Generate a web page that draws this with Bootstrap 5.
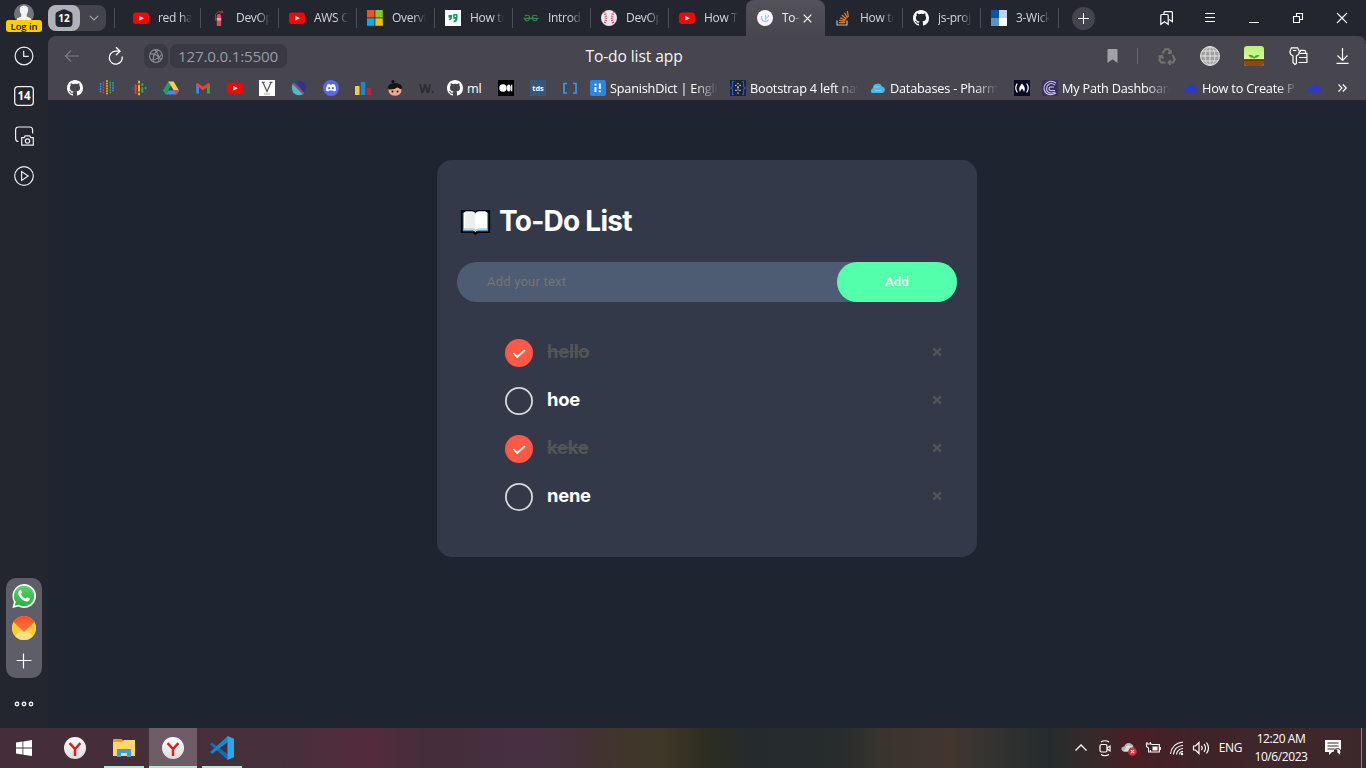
<!DOCTYPE html>
<html lang="en">
<head>
<meta charset="utf-8">
<meta name="viewport" content="width=device-width, initial-scale=1">
<title>To-do list app</title>
<link href="https://cdn.jsdelivr.net/npm/bootstrap@5.3.0/dist/css/bootstrap.min.css" rel="stylesheet">
<style>
  body { width: 1366px; height: 768px; overflow: hidden; background: #24262f; font-family: "Open Sans", "Noto Sans", sans-serif; font-size: 12px; color: #fff; line-height: 1; }
  svg { display: block; flex: none; overflow: visible; }
  .side { width: 48px; height: 728px; background: #24262f; }
  .login { background: #ffcc00; color: #111; font-size: 9.5px; font-weight: 600; width: 36px; height: 12px; border-radius: 3px; line-height: 13px; margin-top: -4px; z-index: 1; letter-spacing: -.1px; }
  .side-apps { width: 36px; height: 100px; border-radius: 10px; background: #5d5e67; margin-top: 392px; padding-top: 6px; }
  .strip { height: 36px; background: #24262f; }
  .group-pill { width: 58px; height: 26px; background: #43444d; border-radius: 8px; }
  .group-count { width: 32px; height: 26px; background: #b1b2b7; border-radius: 8px; }
  .tab { width: 78px; height: 36px; padding-left: 10px; color: #d5d6da; }
  .tab .clip { width: 34px; margin-left: 9px; overflow: hidden; white-space: nowrap; line-height: 18px; letter-spacing: -.3px; -webkit-mask-image: linear-gradient(90deg, #000 65%, transparent); mask-image: linear-gradient(90deg, #000 65%, transparent); }
  .sep { width: 1px; height: 20px; background: #4d4e57; flex: none; }
  .tab.on { width: 79px; margin-left: -1px; padding-left: 11px; background: linear-gradient(#53525b, #47464f); border-radius: 8px 8px 0 0; color: #f0f0f2; }
  .tab.on .clip { width: 18px; }
  .plus { width: 23px; height: 23px; border-radius: 50%; background: #43444d; margin-left: 13px; }
  .wbtn { width: 44px; height: 36px; }
  .bars { height: 64px; background: #47464f; border-radius: 8px 8px 0 0; }
  .toolbar { height: 40px; }
  .url { background: #383943; height: 24px; border-radius: 7px; color: #9a9ba2; }
  .addr { font-size: 15.2px; width: 117px; padding-left: 8px; line-height: 25px; letter-spacing: -.2px; }
  .ttl { left: 0; right: 0; margin-left: -146px; font-size: 15.6px; color: #f4f4f5; line-height: 40px; pointer-events: none; letter-spacing: -.1px; }
  .marks { height: 24px; padding-left: 11px; }
  .mk { width: 32px; height: 24px; }
  .mt { padding-left: 4px; width: 140px; }
  .mt span { margin-left: 4px; width: 108px; overflow: hidden; white-space: nowrap; font-size: 12.7px; line-height: 20px; letter-spacing: -.2px; -webkit-mask-image: linear-gradient(90deg, #000 78%, transparent); mask-image: linear-gradient(90deg, #000 78%, transparent); }
  .page { background: #1f2530; height: 628px; padding-top: 60px; }
  .todo { width: 540px; height: 397px; background: #333948; border-radius: 15px; padding: 42px 20px 0; font-family: Inter, sans-serif; }
  .todo h2 { font-size: 28px; font-weight: 700; height: 40px; margin: 0 0 20px; padding-left: 3px; letter-spacing: -.75px; }
  .entry { height: 40px; border-radius: 20px; background: #4e5c73; font-family: Roboto, sans-serif; font-size: 13px; }
  .entry input { background: none; border: 0; outline: 0; padding: 0 30px 2px; color: #fff; letter-spacing: .2px; }
  .entry input::placeholder { color: #757575; opacity: 1; }
  .entry button { width: 120px; border: 0; border-radius: 20px; background: #53ffaa; color: #fff; font-weight: 500; letter-spacing: .3px; padding: 0 0 2px; }
  .item { height: 48px; padding-left: 48px; padding-right: 15px; font-size: 18.4px; font-weight: 700; letter-spacing: -.25px; }
  .item p { margin: 0 0 0 14px; line-height: 42px; padding-bottom: 5px; flex: 1; }
  .item .cross { margin-bottom: 2px; }
  .done p { color: #555; text-decoration: line-through; }
  .taskbar { height: 40px; background: linear-gradient(90deg, #452d39 0, #46303c 280px, #542b3c 365px, #452d3b 430px, #473140 540px, #44303a 575px, #40352b 620px, #3e3829 660px, #2b2d20 710px, #252b2d 750px, #272c2d 840px, #38352d 880px, #42362f 950px, #343331 990px, #252c2d 1050px, #352a29 1090px, #481f25 1135px, #3e2329 1200px, #3f272a 1280px, #3c282c 1366px); }
  .app { width: 48px; height: 40px; margin-right: 1px; }
  .app.live { box-shadow: inset 0 -2px #a4f0d0; background: rgba(255,255,255,.22); }
  .app.run::after { content: ""; position: absolute; left: 4px; right: 4px; bottom: 0; height: 2px; background: #a4f0d0; }
  .tray svg { margin: 0 4px; }
  .clock { width: 70px; line-height: 18px; letter-spacing: -.42px; padding-top: 0; }
</style>
</head>
<body class="d-flex flex-column">
<svg width="0" height="0" class="position-absolute">
  <defs>
    <linearGradient id="wa" x1="0" y1="0" x2="0" y2="1"><stop stop-color="#5bd066"/><stop offset="1" stop-color="#27b43e"/></linearGradient>
    <linearGradient id="red" x1="0" y1="0" x2="0" y2="1"><stop stop-color="#ff4b26"/><stop offset="1" stop-color="#f07a3c"/></linearGradient>
    <linearGradient id="leaf" x1="0" y1="0" x2="0" y2="1"><stop stop-color="#b7f27a"/><stop offset="1" stop-color="#eaff9d"/></linearGradient>
    <linearGradient id="sil" x1="0" y1="0" x2="0" y2="1"><stop stop-color="#fff"/><stop offset="1" stop-color="#dcdcdc"/></linearGradient>
    <symbol id="yt" viewBox="0 0 16 16"><rect y="2.5" width="16" height="11.5" rx="3" fill="#f00"/><path d="M6.3 5.8v5l4.4-2.5z" fill="#fff"/></symbol>
    <symbol id="gh" viewBox="0 0 16 16"><path fill="#fff" d="M8 0C3.58 0 0 3.58 0 8c0 3.54 2.29 6.53 5.47 7.59.4.07.55-.17.55-.38 0-.19-.01-.82-.01-1.49-2.01.37-2.53-.49-2.69-.94-.09-.23-.48-.94-.82-1.13-.28-.15-.68-.52-.01-.53.63-.01 1.08.58 1.23.82.72 1.21 1.87.87 2.33.66.07-.52.28-.87.51-1.07-1.78-.2-3.64-.89-3.64-3.95 0-.87.31-1.59.82-2.15-.08-.2-.36-1.02.08-2.12 0 0 .67-.21 2.2.82A7.6 7.6 0 0 1 8 3.86c.68 0 1.36.09 2 .27 1.53-1.04 2.2-.82 2.2-.82.44 1.1.16 1.92.08 2.12.51.56.82 1.27.82 2.15 0 3.07-1.87 3.75-3.65 3.95.29.25.54.73.54 1.48 0 1.07-.01 1.93-.01 2.2 0 .21.15.46.55.38A8.01 8.01 0 0 0 16 8c0-4.42-3.58-8-8-8"/></symbol>
    <symbol id="ya" viewBox="0 0 22 22"><circle cx="11" cy="11" r="11" fill="url(#sil)"/><path d="M5.6 6.2 11 12l5.4-5.8M11 11.5V19" fill="none" stroke="#dd1f1f" stroke-width="2.5"/></symbol>
    <symbol id="cloud" viewBox="0 0 16 16"><path d="M.5 12Q1 9 4 9 4 5.500 7 5.800 8.500 3.500 11 4.500q1.800 1 1.500 3 3.200.2 3.200 2.700T13 12.500H2z" fill="#2d37c9"/><path d="M1 9.500h4M0 11h3" stroke="#47464f" stroke-width=".6"/></symbol>
  </defs>
</svg>

<div class="d-flex">
  <aside class="side d-flex flex-column align-items-center">
    <svg width="20" height="20" viewBox="0 0 20 20" style="margin-top:4px"><circle cx="10" cy="10" r="10" fill="#74757a"/><path d="M10 1.500c5 0 5 6 2.700 8.700v2.300L17 14.500v3H3v-3l4.300-2V10.200C5 7.500 5 1.500 10 1.500" fill="#f5f5f5"/></svg>
    <div class="login text-center">Log in</div>
    <svg width="20" height="20" viewBox="0 0 20 20" style="margin-top:14px" fill="none" stroke="#eee" stroke-width="1.200"><circle cx="10" cy="10" r="8.900"/><path d="M9.700 4.800v5.500h5"/></svg>
    <svg width="20" height="20" viewBox="0 0 20 20" style="margin-top:20px"><rect x=".7" y=".7" width="18.600" height="18.600" rx="3" fill="none" stroke="#eee" stroke-width="1.300"/><text x="10" y="14.300" text-anchor="middle" font-size="11.500" font-weight="700" fill="#fff" font-family="Open Sans">14</text></svg>
    <svg width="20" height="20" viewBox="0 0 20 20" style="margin-top:20px" fill="none" stroke="#eee" stroke-width="1.200"><path d="M4.500 15.500Q1.600 15.500 1.600 12.500V4Q1.600 1 4.600 1h11Q18.600 1 18.600 4v3.500"/><path d="M7.700 11.600h2.500l1-1.800h4.500l1 1.800h2.600v7.600H7.700z"/><circle cx="13.500" cy="15" r="2.200"/></svg>
    <svg width="20" height="20" viewBox="0 0 20 20" style="margin-top:20px" fill="none" stroke="#eee" stroke-width="1.200"><circle cx="10" cy="10" r="9.300"/><path d="M7.600 5.600v8.800l6.600-4.400z"/></svg>
    <div class="side-apps d-flex flex-column align-items-center">
      <svg width="24" height="24" viewBox="0 0 24 24"><path d="M12 0a12 12 0 1 1-5.600 22.600L.3 24.100 2 18A12 12 0 0 1 12 0" fill="#fff"/><path d="M12 1.800A10.200 10.200 0 1 1 6.700 20.700L2.600 21.700 3.800 18A10.200 10.200 0 0 1 12 1.800" fill="url(#wa)"/><path d="M7.200 6.500c1-1 1.800-.6 2.200.6l.6 1.500c.2.700-1.200 1.500-1 1.900q1.500 2.700 4.400 4c.6.200 1.300-1.500 1.900-1.300l2.200 1.100c.8.500 0 2.300-1.300 2.900-3.500 1.200-9.300-3.600-10-7.500q-.2-2 1-3.200" fill="#fff"/></svg>
      <svg width="24" height="24" viewBox="0 0 24 24" style="margin-top:8px"><clipPath id="cc"><circle cx="12" cy="12" r="12"/></clipPath><g clip-path="url(#cc)"><path fill="#f9c72d" d="M0 0h24v24H0z"/><path d="M0 5l12 9.500L24 5v19H0z" fill="#fbcb31"/><path d="M0 24 9.500 13h5L24 24z" fill="#ffde7c"/><path d="M1 5.500 12 16 23 5.500 18 0H6z" fill="url(#red)"/></g></svg>
      <svg width="16" height="16" viewBox="0 0 16 16" style="margin-top:13px" stroke="#fff" stroke-width="1.200"><path d="M.5 7.500h15M7.500.5v15"/></svg>
    </div>
    <svg width="20" height="6" viewBox="0 0 20 6" style="margin-top:23px" fill="none" stroke="#eee" stroke-width="1.400"><circle cx="3" cy="3" r="1.700"/><circle cx="10" cy="3" r="1.700"/><circle cx="17" cy="3" r="1.700"/></svg>
  </aside>

  <main class="flex-grow-1">
    <div class="strip d-flex align-items-center">
      <div class="group-pill d-flex align-items-center">
        <div class="group-count d-flex align-items-center justify-content-center">
          <svg width="18" height="18" viewBox="0 0 18 18"><path d="M7 .8q2-1.300 4 0l5 2.200q1.500 1 1.500 2.500V14q0 4-4 4h-9q-4 0-4-4V5.500Q.5 4 2 3z" fill="#24262f"/><text x="9" y="13" text-anchor="middle" font-size="10" font-weight="700" fill="#fff" font-family="Open Sans">12</text></svg>
        </div>
        <svg width="10" height="6" viewBox="0 0 10 6" style="margin-left:9px" fill="none" stroke="#a0a1a7" stroke-width="1.200"><path d="m.8.800 4.200 4.200L9.200.8"/></svg>
      </div>
      <div class="sep" style="margin-left:8px;margin-right:8px"></div>
      <div class="tab d-flex align-items-center"><svg width="16" height="16"><use href="#yt"/></svg><div class="clip">red ha</div><div class="sep ms-auto"></div></div>
      <div class="tab d-flex align-items-center"><svg width="16" height="16" viewBox="0 0 16 16"><path d="M5.800 6q0-2 2.200-2t2.200 2v10H5.800z" fill="#e5475b"/><path d="M5.800 8h4.400v2.500H5.800z" fill="#eaa9ad"/><path d="M4.500 4.500 7 2l4.500-1 .5 1.500L8.500 3M4.500 4v7" stroke="#a33342" fill="none"/></svg><div class="clip">DevOp</div><div class="sep ms-auto"></div></div>
      <div class="tab d-flex align-items-center"><svg width="16" height="16"><use href="#yt"/></svg><div class="clip">AWS C</div><div class="sep ms-auto"></div></div>
      <div class="tab d-flex align-items-center"><svg width="16" height="16" viewBox="0 0 16 16"><path fill="#f1511b" d="M0 0h7.500v7.500H0z"/><path fill="#80cc28" d="M8.300 0h7.500v7.500H8.300z"/><path fill="#00adef" d="M0 8.300h7.500v7.500H0z"/><path fill="#fbbc09" d="M8.300 8.300h7.500v7.500H8.300z"/></svg><div class="clip">Overvi</div><div class="sep ms-auto"></div></div>
      <div class="tab d-flex align-items-center"><svg width="16" height="16" viewBox="0 0 16 16"><path fill="#fff" d="M0 0h16v16H0z"/><path d="M3.500 5h3.700v2q0 3-3 3.500v-1.800q1-.2 1.200-1H3.500zM8.200 4h4.300v5q-.3 3-4 3.500v-1.800q1.800-.5 2-2H8.200z" fill="#0b9d63"/><path d="M9.700 5.400h1.300v1.500H9.700z" fill="#fff"/></svg><div class="clip">How to</div><div class="sep ms-auto"></div></div>
      <div class="tab d-flex align-items-center"><svg width="16" height="16" viewBox="0 0 16 16" fill="none" stroke="#2f8d46" stroke-width="1.200"><path d="M2 6q2-1.500 4.200 0 1 2-.2 4-3 1.500-4-.8l-.7-.9h13.400L14 9.200q-1 2.300-4 .8-1.200-2-.2-4 2.200-1.500 4.200 0"/></svg><div class="clip">Introd</div><div class="sep ms-auto"></div></div>
      <div class="tab d-flex align-items-center"><svg width="16" height="16" viewBox="0 0 16 16"><circle cx="8" cy="8" r="8" fill="#e8e9ee"/><path d="M3 1.500q4 6.500 0 13M13 1.500q-4 6.500 0 13" fill="none" stroke="#d63b4f" stroke-width="2.300" stroke-dasharray="1 1.200"/></svg><div class="clip">DevOp</div><div class="sep ms-auto"></div></div>
      <div class="tab d-flex align-items-center"><svg width="16" height="16"><use href="#yt"/></svg><div class="clip">How T</div></div>
      <div class="tab on d-flex align-items-center"><svg width="16" height="16" viewBox="0 0 16 16"><circle cx="8" cy="8" r="8" fill="#f7f8fc"/><path d="M4.500 6v2.500q1 3 3.500 3t3.500-2" fill="none" stroke="#b9b6e8" stroke-width="1.300"/><path d="M8.500 5v4l3-2.500V5" fill="none" stroke="#8fcfe0" stroke-width="1.100"/></svg><div class="clip">To-d</div><svg width="9" height="9" viewBox="0 0 9 9" style="margin-left:3px" stroke="#fff" stroke-width="1.200"><path d="m.7.700 7.600 7.600m0-7.600L.7 8.300"/></svg></div>
      <div class="tab d-flex align-items-center"><svg width="16" height="16" viewBox="0 0 16 16" fill="none" stroke="#f48024" stroke-width="1.200"><path d="M2 10.500V15h10v-4.500" stroke="#bcbbbb"/><path d="M4 12.700h6M4.200 10.300l6 .8M5 7.800l5.600 2.300M6.800 5l4.600 4M9.500 2.800l3 5.200M12.400 1l.9 6"/></svg><div class="clip">How to</div><div class="sep ms-auto"></div></div>
      <div class="tab d-flex align-items-center"><svg width="16" height="16"><use href="#gh"/></svg><div class="clip">js-proj</div><div class="sep ms-auto"></div></div>
      <div class="tab d-flex align-items-center"><svg width="16" height="16" viewBox="0 0 16 16"><path fill="#0458a3" d="M0 0h8v8H0z"/><path fill="#bdd2f3" d="M8 0h8v8H8z"/><path fill="#5a93c8" d="M0 8h8v8H0z"/><path fill="#fff" d="M8 8h8v8H8z"/></svg><div class="clip">3-Wick</div><div class="sep ms-auto"></div></div>
      <div class="plus d-flex align-items-center justify-content-center"><svg width="11" height="11" viewBox="0 0 11 11" stroke="#fff"><path d="M0 5.500h11M5.500 0v11"/></svg></div>
      <div class="d-flex ms-auto" style="margin-right:2px">
        <div class="wbtn d-flex align-items-center justify-content-center"><svg width="13" height="14" viewBox="0 0 13 14" fill="none" stroke="#fff" stroke-width="1.200"><path d="M.8 4.500q0-1 1-1h5.400q1 0 1 1v8.800L4.500 10.800.8 13.300z"/><path d="M4 3V1.600Q4 .6 5 .6h6.400q1 0 1 1v9L9 8.500"/></svg></div>
        <div class="wbtn d-flex align-items-center justify-content-center"><svg width="10" height="10" viewBox="0 0 10 10" stroke="#fff"><path d="M0 .5h10M0 4.500h10M0 8.500h10"/></svg></div>
        <div class="wbtn d-flex align-items-center justify-content-center"><svg width="10" height="10" viewBox="0 0 10 10" stroke="#fff"><path d="M0 9.500h10"/></svg></div>
        <div class="wbtn d-flex align-items-center justify-content-center"><svg width="10" height="10" viewBox="0 0 10 10" fill="none" stroke="#fff" stroke-width="1.100"><path d="M.5 3.500h6v6h-6zM3.500 3V.5h6v6H7"/></svg></div>
        <div class="wbtn d-flex align-items-center justify-content-center"><svg width="10" height="10" viewBox="0 0 10 10" stroke="#fff" stroke-width="1.100"><path d="m0 0 10 10m0-10L0 10"/></svg></div>
      </div>
    </div>

    <div class="bars">
      <div class="toolbar d-flex align-items-center position-relative">
        <svg width="14" height="12" viewBox="0 0 14 12" style="margin-left:17px" fill="none" stroke="#7b7b83" stroke-width="1.200"><path d="M14 6H.8M6 .5.500 6 6 11.500"/></svg>
        <svg width="16" height="18" viewBox="0 0 16 18" style="margin-left:29px" fill="none" stroke="#fff" stroke-width="1.300"><path d="M11.500 4.200H7.500A6.500 6.500 0 1 0 14.200 9.500M8 .3l4 3.900L8 8"/></svg>
        <div class="url d-flex align-items-center justify-content-center" style="width:24px;margin-left:20px"><svg width="14" height="14" viewBox="0 0 14 14" fill="none" stroke="#8b8c93" stroke-width="1.100"><circle cx="7" cy="7" r="6.400"/><path d="M1 5q6-1 11 5.500M9.500 1Q3 5 4.500 13M2 11q7 0 11-6M6 1q5 5 3.500 12"/></svg></div>
        <div class="url addr" style="margin-left:2px">127.0.0.1:5500</div>
        <div class="ttl position-absolute text-center">To-do list app</div>
        <div class="ms-auto d-flex align-items-center" style="margin-right:17px">
          <svg width="11" height="14" viewBox="0 0 11 14"><path d="M.5 1q0-1 1-1h8q1 0 1 1v13l-5-3.700L.5 14z" fill="#a1a1a6"/></svg>
          <div class="sep" style="height:16px;background:#696971;margin:0 20px 0 19px"></div>
          <svg width="18" height="18" viewBox="0 0 18 18" fill="none" stroke="#74746f" stroke-width="2.600"><path d="m4.500 6.500 2.700-4.300h3.300l1.800 3M12.800 3v3h-3M14.500 8l2.300 4.500-1.800 3h-4M12.500 13l-2 2.500 2 2.500M7.500 15.500H3l-1.700-3L3.500 9M.5 9.500l3.500-.7 1 3" stroke-width="2"/></svg>
          <svg width="20" height="20" viewBox="0 0 20 20" style="margin-left:24px"><circle cx="10" cy="10" r="10" fill="#a0a0a0"/><g fill="none" stroke="#e0e0e0"><circle cx="10" cy="10" r="9.300"/><ellipse cx="10" cy="10" rx="5" ry="9.300"/><path d="M10 0v20M0 10h20M2 5h16M2 15h16"/></g></svg>
          <svg width="20" height="20" viewBox="0 0 20 20" style="margin-left:24px"><rect width="20" height="20" rx="3" fill="url(#leaf)"/><path d="M0 13.500h20V17q0 3-3 3H3q-3 0-3-3z" fill="#8a4a0e"/><path d="M0 14h20" stroke="#6a2e05" stroke-width="1.500"/><path d="M9.700 12Q5.500 12 4.500 9q4-.7 5.500 2Q11 8.500 15.500 9q-1.500 3-5 3v1.500h-.8z" fill="#47a614"/></svg>
          <svg width="19" height="20" viewBox="0 0 19 20" style="margin-left:25px" fill="none" stroke="#fff" stroke-width="1.200"><path d="M4 10Q.9 8.500.9 5.500L2.400 1.800h6.200l1.800 3.700q0 3-3 4.500v7.500L6 18.500 4 16.500zM3.800 4.500h3.600"/><path d="M9.500 16.500h8.400V7.300H10.500M11.500 6V4.300h3.800q1.200 0 1.200 1.200V7M10 11.500h7.500"/></svg>
          <svg width="13" height="16" viewBox="0 0 13 16" style="margin-left:28px" fill="none" stroke="#fff" stroke-width="1.200"><path d="M6.500 0v12M1.500 7.500l5 5 5-5M.5 15.300h12"/></svg>
        </div>
      </div>
      <div class="marks d-flex">
        <div class="mk d-flex align-items-center justify-content-center"><svg width="16" height="16"><use href="#gh"/></svg></div>
        <div class="mk d-flex align-items-center justify-content-center"><svg width="16" height="16" viewBox="0 0 16 16" fill="none" stroke-width="1.900" stroke-linecap="round" stroke-dasharray="0 2.500"><path d="M1.500 4v9M14 3v10" stroke="#4285f4"/><path d="M4.500 2.500V15" stroke="#ea4335" opacity=".8"/><path d="M8 1v15" stroke="#fbbc04"/><path d="M11.300 2.500V15" stroke="#34a853"/></svg></div>
        <div class="mk d-flex align-items-center justify-content-center"><svg width="16" height="16" viewBox="0 0 16 16" fill="none" stroke-width="2" stroke-linecap="round"><path d="M1.500 8v.2" stroke="#0066d9"/><path d="M4.700 5.200v5.600M4.700 12.500v.5" stroke="#ea4335"/><path d="M8 1.500v1M8 5.500v5.200M8 13.500v1" stroke="#fab908"/><path d="M11.300 4v1M11.300 8v4" stroke="#34a853"/><path d="M14.500 8v.2" stroke="#4285f4"/></svg></div>
        <div class="mk d-flex align-items-center justify-content-center"><svg width="16" height="16" viewBox="0 0 16 16"><path d="M5.300 1.500 0 10.500 2.600 14.500 8 5.500z" fill="#11a861"/><path d="M5.300 1.500h5.300L16 10.500h-5.200z" fill="#ffcf48"/><path d="M5.300 10.500H16l-2.600 4H2.700z" fill="#4688f4"/><path d="M10.700 10.500H16l-2.600 4z" fill="#e94235"/></svg></div>
        <div class="mk d-flex align-items-center justify-content-center"><svg width="16" height="16" viewBox="0 0 16 16" fill="none" stroke-width="2.800"><path d="M2.600 13.500V5" stroke="#4285f4"/><path d="M13.400 13.500V5" stroke="#34a853"/><path d="M1.500 3.800 8 8.500l6.500-4.700" stroke="#ea4335"/></svg></div>
        <div class="mk d-flex align-items-center justify-content-center"><svg width="16" height="16"><use href="#yt"/></svg></div>
        <div class="mk d-flex align-items-center justify-content-center"><svg width="16" height="16" viewBox="0 0 16 16"><path fill="#fff" d="M0 0h16v16H0z"/><path d="M4 2.500 8 11.500 12 2.500M2.700 2.300h3M10.500 2.300h3" fill="none" stroke="#555" stroke-width="1.200"/><path d="M5 14h6" stroke="#aaa"/></svg></div>
        <div class="mk d-flex align-items-center justify-content-center"><svg width="16" height="16" viewBox="0 0 16 16"><circle cx="8" cy="8" r="7.500" fill="#274a86"/><path d="M5 1Q13-1 15.400 7l-2 6z" fill="#3a2f86"/><path d="M2 3 12.500 14Q7 17 2.500 13-.5 8 2 3" fill="#53b7c5"/><path d="M3 2.500 13.500 13l-1.500 1.500L1.500 4z" fill="#a04774"/></svg></div>
        <div class="mk d-flex align-items-center justify-content-center"><svg width="16" height="16" viewBox="0 0 16 16"><circle cx="8" cy="8" r="8" fill="#5865f2"/><path d="M4.300 4.500 6.500 4l.5.800h2l.5-.8 2.200.5q1.600 2.800 1.400 6L11 11.600l-.8-1.200H5.800L5 11.600l-2.100-1.100q-.2-3.200 1.400-6" fill="#fff"/><circle cx="6.200" cy="8.200" r="1.100" fill="#5865f2"/><circle cx="9.800" cy="8.200" r="1.100" fill="#5865f2"/></svg></div>
        <div class="mk d-flex align-items-center justify-content-center"><svg width="16" height="16" viewBox="0 0 16 16"><rect y="6" width="4.500" height="9" rx=".6" fill="#f9c846"/><rect x="5.800" y="2" width="4.500" height="13" rx=".6" fill="#1b87d0"/><rect x="11.600" y="8" width="4.400" height="7" rx=".6" fill="#c3252d"/></svg></div>
        <div class="mk d-flex align-items-center justify-content-center"><svg width="16" height="16" viewBox="0 0 16 16"><circle cx="6" cy="1.500" r="1.600" fill="#111"/><path d="M.5 9Q1 3 8 3t7.500 6z" fill="#151313"/><path d="M1.500 8.500Q8 6 14.500 8.500 15 15.500 8 15.800 1 15.500 1.500 8.500" fill="#f5a58d"/><path d="M1.500 9.500Q8 9.800 10.500 7 12 8.500 14.500 9.500L14 6H2.500z" fill="#151313"/><circle cx="5.500" cy="11.500" r=".9"/><circle cx="10.500" cy="11.500" r=".9"/></svg></div>
        <div class="mk d-flex align-items-center justify-content-center"><svg width="16" height="16" viewBox="0 0 16 16"><text x="0" y="12.500" font-family="Open Sans" font-weight="700" font-size="12.500" fill="#2b2b2f">W.</text></svg></div>
        <div class="mt d-flex align-items-center" style="width:47px"><svg width="16" height="16"><use href="#gh"/></svg><span style="-webkit-mask:none;mask:none">ml</span></div>
        <div class="mk d-flex align-items-center justify-content-center"><svg width="16" height="16" viewBox="0 0 16 16"><path d="M0 0h16v16H0z"/><circle cx="5" cy="8" r="3.700" fill="#fff"/><ellipse cx="10.800" cy="8" rx="1.900" ry="3.500" fill="#fff"/><path d="M13.700 4.800v6.400" stroke="#fff" stroke-width="1.200"/></svg></div>
        <div class="mk d-flex align-items-center justify-content-center"><svg width="16" height="16" viewBox="0 0 16 16"><path fill="#355876" d="M0 0h16v16H0z"/><text x="8" y="10.700" text-anchor="middle" font-family="Open Sans" font-weight="700" font-size="7.300" fill="#fff">tds</text></svg></div>
        <div class="mk d-flex align-items-center justify-content-center"><svg width="16" height="16" viewBox="0 0 16 16" fill="none" stroke="#3a93f0" stroke-width="1.700"><path d="M5 3.500H2v9.500h3M11 3.500h3v9.500h-3"/></svg></div>
        <div class="mt d-flex align-items-center"><svg width="16" height="16" viewBox="0 0 16 16"><rect width="16" height="16" rx="2" fill="#2a86e5"/><path d="M5.500 7v5M9.800 3.500v5.500M9.800 10.500v1.800M5.500 3.800v1.700" stroke="#fff" stroke-width="2"/></svg><span>SpanishDict | Englis</span></div>
        <div class="mt d-flex align-items-center"><svg width="16" height="16" viewBox="0 0 16 16"><path fill="#1c2436" d="M0 0h16v16H0z"/><path d="M4 1.500H2.500v5L1 8l1.500 1.500v5H4M12 1.500h1.500v5L15 8l-1.500 1.500v5H12" fill="none" stroke="#2456e6" stroke-width="1.200"/><path d="M8 3v11M5.500 5l5 6M10.500 5l-5 6" stroke="#e8ecf8" stroke-width="1.200" stroke-dasharray="1.200 2"/></svg><span>Bootstrap 4 left nav</span></div>
        <div class="mt d-flex align-items-center"><svg width="16" height="16" viewBox="0 0 16 16"><path d="M1.500 13Q0 9.500 3 8q0-4 3.500-4Q10 2 12 6.500q3 .5 2.800 3.500-.3 3-3 3z" fill="#4bb7e8"/><path d="M4.500 7h5M5 10.500h6" stroke="#82cfef"/></svg><span>Databases - Pharm</span></div>
        <div class="mk d-flex align-items-center justify-content-center"><svg width="16" height="16" viewBox="0 0 16 16"><path fill="#0a0a23" d="M0 0h16v16H0z"/><path d="M3.300 3.500q-3 4.500 0 9M12.700 3.500q3 4.500 0 9" fill="none" stroke="#fff" stroke-width="1.200"/><path d="M8 3.500Q3.500 8.500 6 12q.5-2 2-3.500Q9.500 10 10 12q2.500-3.500-2-8.500" fill="#fff"/></svg></div>
        <div class="mt d-flex align-items-center"><svg width="16" height="16" viewBox="0 0 16 16"><path fill="#3b2e63" d="M0 0h16v16H0z"/><path d="M14 3Q8-1 3.500 4-0 9 4.500 13.500 9 16 14 13M13 5Q9 2 6 5q-3 4 0 7 3 2 7 0M12 7H8q-2 2 0 3.500h5" fill="none" stroke="#cfc8ea" stroke-width="1.100"/></svg><span>My Path Dashboard</span></div>
        <div class="mt d-flex align-items-center" style="width:120px"><svg width="16" height="16"><use href="#cloud"/></svg><span style="width:96px">How to Create P</span></div>
        <div class="mk d-flex align-items-center justify-content-center"><svg width="16" height="16"><use href="#cloud"/></svg></div>
        <div class="d-flex align-items-center" style="margin-left:8px"><svg width="9" height="8" viewBox="0 0 9 8" fill="none" stroke="#fff" stroke-width="1.200"><path d="m.5.500 3.500 3.500L.5 7.500M4.800.5 8.300 4 4.800 7.500"/></svg></div>
      </div>
    </div>

    <div class="page">
      <section class="todo mx-auto">
        <h2 class="d-flex align-items-center"><svg width="31" height="26" viewBox="0 0 32 28" style="margin-right:8px"><path d="M1 2h12l3 1.500L19 2h12v23H19l-3 2-3-2H1z" stroke="#000" stroke-width="1.600"/><path d="M2.300 4h27.400v20H2.300z" fill="#4c9bd8"/><path d="M3.500 3.500H12q3 0 4 2.500 1-2.500 4-2.500h8.500v19H19l-3 1.500-3-1.500H3.500z" fill="#fff"/><path d="M5 2.500h7q4 .5 4 3V23q-1.500-2-4-2H5z" fill="#eee"/><path d="M16 5.500q0-2.500 4-3h7V21h-7q-2.500 0-4 2z" fill="#fff"/><path d="M3.500 21.500H12q3 0 4 2 1-2 4-2h8.500" stroke="#c4c8cc" fill="none" stroke-width="1.500"/></svg>To-Do List</h2>
        <div class="entry d-flex mb-4"><input class="flex-grow-1" type="text" placeholder="Add your text"><button type="button">Add</button></div>
        <div style="padding-top:3px">
          <div class="item done d-flex align-items-center"><svg width="28" height="28" viewBox="0 0 28 28"><circle cx="14" cy="14" r="14" fill="#ff5945"/><path d="m8.500 14 3.700 4 7.800-7" fill="none" stroke="#fff" stroke-width="1.700"/></svg><p>hello</p><svg class="cross" width="10" height="10" viewBox="0 0 10 10" stroke="#555" stroke-width="2.400"><path d="m1.300 1.300 7.400 7.400m0-7.400L1.300 8.700"/></svg></div>
          <div class="item d-flex align-items-center"><svg width="28" height="28" viewBox="0 0 28 28"><circle cx="14" cy="14" r="13.100" fill="none" stroke="#d8d9dc" stroke-width="1.800"/></svg><p>hoe</p><svg class="cross" width="10" height="10" viewBox="0 0 10 10" stroke="#555" stroke-width="2.400"><path d="m1.300 1.300 7.400 7.400m0-7.400L1.300 8.700"/></svg></div>
          <div class="item done d-flex align-items-center"><svg width="28" height="28" viewBox="0 0 28 28"><circle cx="14" cy="14" r="14" fill="#ff5945"/><path d="m8.500 14 3.700 4 7.800-7" fill="none" stroke="#fff" stroke-width="1.700"/></svg><p>keke</p><svg class="cross" width="10" height="10" viewBox="0 0 10 10" stroke="#555" stroke-width="2.400"><path d="m1.300 1.300 7.400 7.400m0-7.400L1.300 8.700"/></svg></div>
          <div class="item d-flex align-items-center"><svg width="28" height="28" viewBox="0 0 28 28"><circle cx="14" cy="14" r="13.100" fill="none" stroke="#d8d9dc" stroke-width="1.800"/></svg><p>nene</p><svg class="cross" width="10" height="10" viewBox="0 0 10 10" stroke="#555" stroke-width="2.400"><path d="m1.300 1.300 7.400 7.400m0-7.400L1.300 8.700"/></svg></div>
        </div>
      </section>
    </div>
  </main>
</div>

<footer class="taskbar d-flex align-items-center">
  <div class="app d-flex align-items-center justify-content-center" style="margin-right:3px"><svg width="16" height="16" viewBox="0 0 16 16" fill="#fff"><path d="M0 2.500 6.500 1.500v6H0zM7.300 1.400 16 0v7.500H7.300zM0 8.400h6.500v6.200L0 13.600zM7.300 8.400H16V16l-8.700-1.200z"/></svg></div>
  <div class="app d-flex align-items-center justify-content-center"><svg width="22" height="22"><use href="#ya"/></svg></div>
  <div class="app run position-relative d-flex align-items-center justify-content-center"><svg width="22" height="18" viewBox="0 0 22 18"><path d="M0 1q0-1 1-1h7.500l2 2H22v15H0z" fill="#e5a50f"/><path d="M0 3h9l2-2h11v16H0z" fill="#ffd767"/><path d="M4 10h14v8h-4v-4H8v4H4z" fill="#3f9be0"/></svg></div>
  <div class="app live d-flex align-items-center justify-content-center"><svg width="22" height="22"><use href="#ya"/></svg></div>
  <div class="app run position-relative d-flex align-items-center justify-content-center"><svg width="24" height="24" viewBox="0 0 24 24"><path d="M0 8.200 2 6.500l16 12V24L.2 8.800z" fill="#0a6fb5"/><path d="M0 16 18 0v6L2.200 17.700z" fill="#1289d4"/><path d="m17.500 0 6.500 2.700v18.600L17.500 24z" fill="#2aa7f2"/></svg></div>
  <div class="tray d-flex align-items-center ms-auto">
    <svg width="16" height="16" viewBox="0 0 16 16" fill="none" stroke="#fff" stroke-width="1.300"><path d="m2.500 10.500 5.500-5.500 5.500 5.500"/></svg>
    <svg width="16" height="16" viewBox="0 0 16 16" fill="none" stroke="#fff" stroke-width="1.200"><rect x="3" y="4.500" width="7" height="7.500" rx="1.500"/><path d="m10 8 3-2v5l-3-2M4 2Q8-.5 12 2M4 14.500Q8 17 12 14.500"/></svg>
    <svg width="16" height="16" viewBox="0 0 16 16"><path d="M2.500 11.500Q-.5 10 .8 7.500 2 6.500 3.300 6.500 4.500 2.500 8.500 3q3.500 1 4 4l-4 4.500z" fill="#b7b7b7"/><path d="M5 6.500Q9 4 13 8l-5 3.500H2.500Q5 9 5 6.500" fill="#dedede"/><circle cx="11.500" cy="11.500" r="4.300" fill="#d92d38"/><path d="m9.900 9.900 3.200 3.200m0-3.200-3.200 3.200" stroke="#fff" stroke-width="1.100"/></svg>
    <svg width="16" height="16" viewBox="0 0 16 16"><path d="M6.500 4.500h7.800v7.500H5.500V10M15.300 7v3M.8 4h6M2 2v2M5.300 2v2M1.500 4v2.500L3.500 8v4h2" fill="none" stroke="#fff" stroke-width="1.100"/><path d="M7.500 6.500h5V10.500h-5z" fill="#fff"/></svg>
    <svg width="16" height="16" viewBox="0 0 16 16" fill="none" stroke="#fff" stroke-width="1.100"><path d="M1.500 14Q2.500 3.500 14 2M4.500 14.500Q5 6.500 14 5.200M7.500 14.500Q8 9.500 14 8.300M10.500 14.500Q10.500 12 14 11.300"/><circle cx="13" cy="14" r="1.200" fill="#fff" stroke="none"/></svg>
    <svg width="16" height="16" viewBox="0 0 16 16" fill="none" stroke="#fff" stroke-width="1.200"><path d="M.5 6h2L6 2.500v11L2.500 10h-2zM8.500 5.800q1.500 2.200 0 4.400M11 4q3 4 0 8M13.500 2.500q4 5.500 0 11"/></svg>
  </div>
  <div class="text-center" style="width:33px;padding-left:2px;letter-spacing:-.3px">ENG</div>
  <div class="clock text-center">12:20 AM<br>10/6/2023</div>
  <svg width="16" height="16" viewBox="0 0 16 16" style="margin-left:9px;margin-right:20px"><path d="M0 0h16v12H7l-3 3v-3H0z" fill="#fff"/><path d="M2.500 3h11M2.500 6h11M2.500 9h7" stroke="#3f272a" stroke-width="1.200"/><circle cx="12.500" cy="12" r="3.500" fill="#fff" stroke="#3f272a"/><path d="M12.500 9.500a3 3 0 1 0 2 4.500q-3-1-2-4.500" fill="#3f272a"/></svg>
  <div style="width:1px;height:40px;background:#8f8286;margin-right:4px"></div>
</footer>
<script src="https://cdn.jsdelivr.net/npm/bootstrap@5.3.0/dist/js/bootstrap.bundle.min.js"></script>
</body>
</html>
